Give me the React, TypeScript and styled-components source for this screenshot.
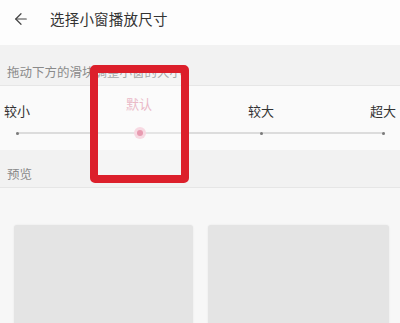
import React from "react";
import styled, { createGlobalStyle } from "styled-components";
import { ArrowLeft } from "lucide-react";

const GlobalStyle = createGlobalStyle`
    html, body {
        margin: 0;
        padding: 0;
        background: #f7f7f7;
        font-family: "Noto Sans CJK SC", "Noto Sans", sans-serif;
    }
`;

const sizes = [
    { label: "较小", active: false },
    { label: "默认", active: true },
    { label: "较大", active: false },
    { label: "超大", active: false },
];

const App = () => {
    return (
        <Page>
            <GlobalStyle />
            <Header>
                <BackButton>
                    <ArrowLeft size={18} strokeWidth={1.6} />
                </BackButton>
                <Title>选择小窗播放尺寸</Title>
            </Header>

            <SectionHeader $height={41}>拖动下方的滑块调整小窗的大小</SectionHeader>

            <SliderPanel>
                <LabelRow>
                    {sizes.map((s) => (
                        <SizeLabel key={s.label} $active={s.active}>
                            {s.label}
                        </SizeLabel>
                    ))}
                </LabelRow>
                <Track>
                    {sizes.map((s) => (
                        <Tick key={s.label} />
                    ))}
                    <Thumb />
                </Track>
            </SliderPanel>

            <SectionHeader $height={38}>预览</SectionHeader>

            <Preview>
                <Card />
                <Card />
            </Preview>

            <Highlight />
        </Page>
    );
};

const Page = styled.div`
    position: relative;
    width: 400px;
    height: 323px;
    overflow: hidden;
    background: #f7f7f7;
`;

const Header = styled.div`
    height: 45px;
    display: flex;
    align-items: center;
    background: #fdfdfd;
    padding-bottom: 8px;
    box-sizing: border-box;
`;

const BackButton = styled.div`
    width: 42px;
    display: flex;
    justify-content: center;
    color: #444;
`;

const Title = styled.div`
    margin-left: 8px;
    font-size: 14.5px;
    color: #333;
    letter-spacing: 0.2px;
`;

const SectionHeader = styled.div<{ $height: number }>`
    height: ${(p) => p.$height}px;
    background: #f2f2f2;
    border-bottom: 1px solid #e6e6e6;
    display: flex;
    align-items: flex-end;
    padding: 0 0 4px 7px;
    box-sizing: border-box;
    font-size: 12.5px;
    color: #8a8a8a;
`;

const SliderPanel = styled.div`
    height: 64px;
    background: #fafafa;
    padding: 16px 4px 0;
    box-sizing: border-box;
`;

const LabelRow = styled.div`
    display: flex;
    justify-content: space-between;
    align-items: flex-start;
`;

const SizeLabel = styled.div<{ $active: boolean }>`
    font-size: 13px;
    line-height: 18px;
    color: ${(p) => (p.$active ? "#e3a2b5" : "#333")};
    margin-top: ${(p) => (p.$active ? "-7px" : "0")};
`;

const Track = styled.div`
    position: relative;
    margin: 12px 11px 0 12px;
    height: 2px;
    background: #dcdcdc;
    display: flex;
    justify-content: space-between;
    align-items: center;
`;

const Tick = styled.span`
    width: 3px;
    height: 3px;
    border-radius: 50%;
    background: #7a7a7a;
`;

const Thumb = styled.span`
    position: absolute;
    left: calc(33.33% - 5px);
    top: -5px;
    width: 12px;
    height: 12px;
    border-radius: 50%;
    background: #f5ccd8;
    &::after {
        content: "";
        position: absolute;
        left: 3px;
        top: 3px;
        width: 6px;
        height: 6px;
        border-radius: 50%;
        background: #e07a96;
    }
`;

const Preview = styled.div`
    display: grid;
    grid-template-columns: 179px 181px;
    gap: 15px;
    padding: 37px 0 0 14px;
`;

const Card = styled.div`
    height: 120px;
    background: #e4e4e4;
    border-radius: 3px;
    box-shadow: 0 0 2px rgba(0, 0, 0, 0.08);
`;

const Highlight = styled.div`
    position: absolute;
    left: 90px;
    top: 65px;
    width: 99px;
    height: 118px;
    box-sizing: border-box;
    border: 8px solid #dc1f2b;
    border-radius: 5px;
    background: rgba(255, 255, 255, 0.25);
`;

export default App;
